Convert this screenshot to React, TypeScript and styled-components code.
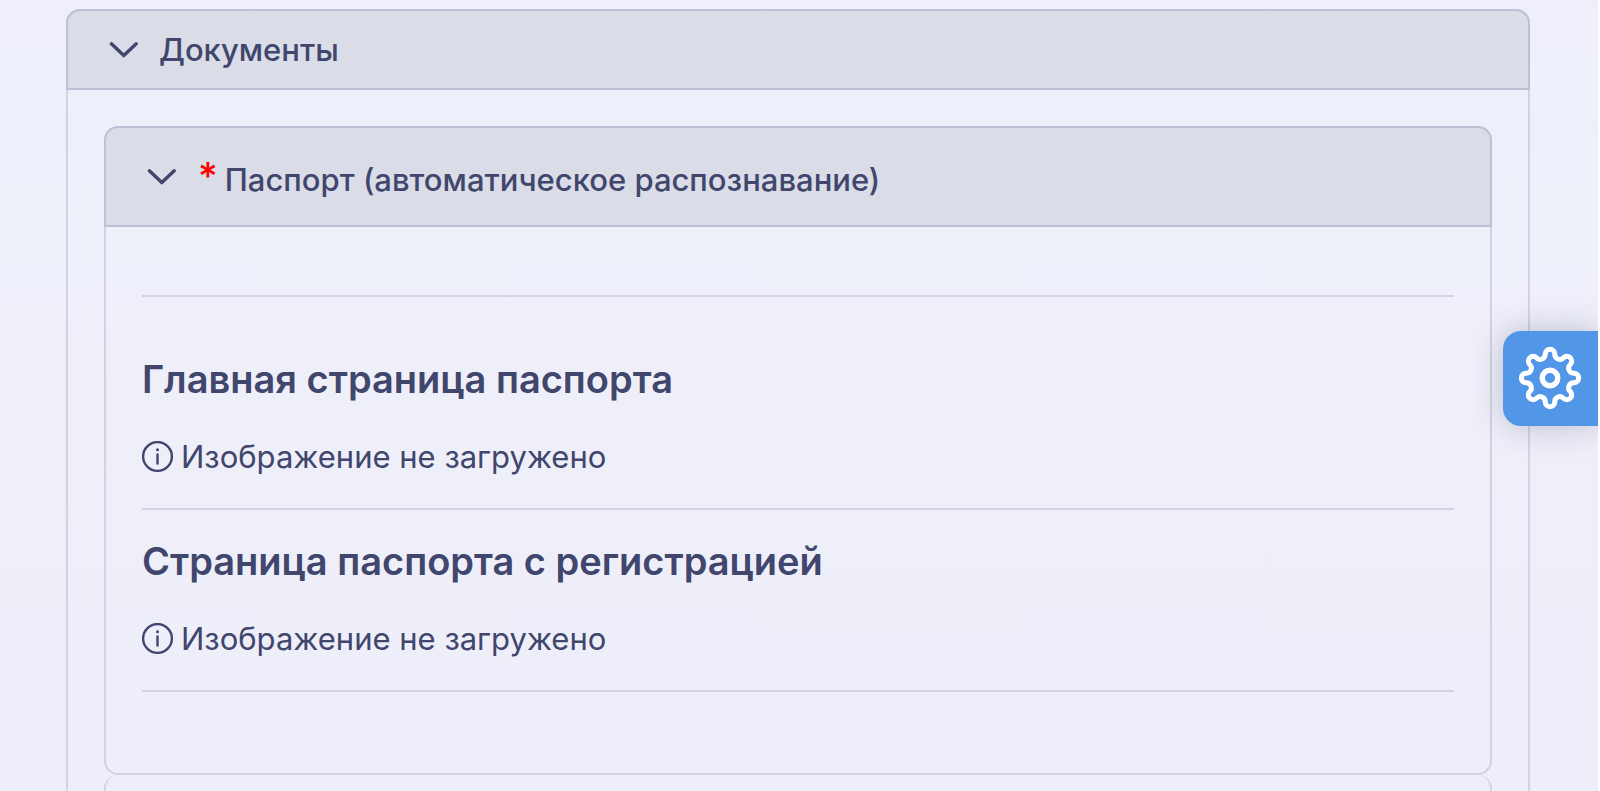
import React from "react";
import styled, { createGlobalStyle } from "styled-components";

const ink = "#40466c";
const line = "#d2d2e3";
const headLine = "#bfc0d5";

const GlobalStyle = createGlobalStyle`
  * { box-sizing: border-box; }
  html { background: #fff; }
  body {
    margin: 0;
    overflow: hidden;
    color: ${ink};
    font-family: Inter, "Noto Sans", sans-serif;
    font-size: 31px;
  }
  #root { height: 100vh; }
`;

const Page = styled.main`
  height: 100%;
  overflow: hidden;
  margin-right: 2px;
  padding: 9px 68px 0 66px;
  background: linear-gradient(180deg, #efeffb 0%, #edf0fa 16%, #efeffa 48%, #eeeefa 100%);
`;

const Panel = styled.section`
  border-radius: 14px;
`;

const PanelHeader = styled.button<{ $tall?: boolean }>`
  display: flex;
  align-items: center;
  width: 100%;
  height: ${(p) => (p.$tall ? 101 : 81)}px;
  padding: 0 41px;
  border: 2px solid ${headLine};
  border-radius: 14px 14px 0 0;
  background: #dadce8;
  color: inherit;
  font: inherit;
  font-weight: 500;
  text-align: left;
`;

const PanelBody = styled.div<{ $closed?: boolean }>`
  padding: 36px;
  border: 2px solid ${line};
  border-top: 0;
  border-radius: ${(p) => (p.$closed ? "0 0 14px 14px" : "0")};
`;

const Chevron = styled.svg`
  flex: none;
  width: 30px;
  height: 18px;
  margin-right: 20px;
`;

const Required = styled.span`
  align-self: flex-start;
  margin: 30px 7px 0 1px;
  color: #f00;
  font-size: 38px;
  line-height: 36px;
`;

const HeaderText = styled.span<{ $low?: boolean }>`
  line-height: 36px;
  padding-top: ${(p) => (p.$low ? 6 : 0)}px;
`;

const Entries = styled.div`
  margin: 32px 0 45px;
  border-top: 2px solid ${line};
`;

const Entry = styled.article<{ $roomy?: boolean }>`
  padding: ${(p) => (p.$roomy ? 58 : 27)}px 0 31px;
  border-bottom: 2px solid ${line};
`;

const EntryTitle = styled.h2`
  margin: 0 0 34px;
  font-size: 38px;
  font-weight: 600;
  line-height: 48px;
`;

const Status = styled.p`
  display: flex;
  align-items: center;
  gap: 7px;
  margin: 0;
  line-height: 40px;
`;

const InfoIcon = styled.svg`
  flex: none;
  width: 32px;
  height: 32px;
`;

const NextPanel = styled.section`
  height: 100px;
  border: 2px solid ${line};
  border-top: 0;
  border-radius: 14px;
`;

const SettingsButton = styled.button`
  position: fixed;
  top: 331px;
  right: 2px;
  display: grid;
  place-items: center;
  width: 95px;
  height: 95px;
  padding: 0 1px 2px 0;
  border: 0;
  border-radius: 18px 0 0 18px;
  background: #5296e7;
  box-shadow: 0 0 32px rgba(60, 60, 90, 0.28);
  clip-path: inset(-50px 0 -50px -50px);
`;

const Down = () => (
  <Chevron viewBox="0 0 30 18" fill="none" stroke={ink} strokeWidth="3.4" strokeLinecap="round" strokeLinejoin="round" aria-hidden="true">
    <path d="M2.4 2.8 L14.8 14.6 L27.2 2.8" />
  </Chevron>
);

// Eight round teeth joined by round notches; each pair of arcs meets on the line between their centres.
const gearPath = (() => {
  const tooth = { dist: 24.1, r: 4.8 };
  const notch = { dist: 25.6, r: 5 };
  const at = (dist: number, step: number) => {
    const a = (step * Math.PI) / 8;
    return [32 + dist * Math.sin(a), 32 - dist * Math.cos(a)];
  };
  const join = (toothStep: number, notchStep: number) => {
    const [tx, ty] = at(tooth.dist, toothStep);
    const [nx, ny] = at(notch.dist, notchStep);
    const k = tooth.r / (tooth.r + notch.r);
    return `${(tx + (nx - tx) * k).toFixed(2)} ${(ty + (ny - ty) * k).toFixed(2)}`;
  };
  let d = `M${join(0, -1)}`;
  for (let i = 0; i < 16; i += 2) {
    d += `A${tooth.r} ${tooth.r} 0 0 1 ${join(i, i + 1)}`;
    d += `A${notch.r} ${notch.r} 0 0 0 ${join(i + 2, i + 1)}`;
  }
  return `${d}Z`;
})();

const Gear = () => (
  <svg width="64" height="64" viewBox="0 0 64 64" fill="none" stroke="#fff" strokeWidth="5" strokeLinejoin="round" aria-hidden="true">
    <path d={gearPath} />
    <circle cx="32" cy="32" r="7.8" strokeWidth="5.4" />
  </svg>
);

const NotLoaded = () => (
  <Status>
    <InfoIcon viewBox="0 0 32 32" fill="none" stroke={ink} strokeWidth="2.4" strokeLinecap="round" aria-hidden="true">
      <circle cx="15.5" cy="15.5" r="14.4" />
      <path d="M15.5 13.5V22.5" />
      <circle cx="15.5" cy="8.8" r="1.5" fill={ink} stroke="none" />
    </InfoIcon>
    Изображение не загружено
  </Status>
);

export default function App() {
  return (
    <>
      <GlobalStyle />
      <Page>
        <Panel>
          <PanelHeader type="button" aria-expanded="true">
            <Down />
            <HeaderText>Документы</HeaderText>
          </PanelHeader>
          <PanelBody>
            <Panel>
              <PanelHeader type="button" aria-expanded="true" $tall>
                <Down />
                <Required>*</Required>
                <HeaderText $low>Паспорт (автоматическое распознавание)</HeaderText>
              </PanelHeader>
              <PanelBody $closed>
                <Entries>
                  <Entry $roomy>
                    <EntryTitle>Главная страница паспорта</EntryTitle>
                    <NotLoaded />
                  </Entry>
                  <Entry>
                    <EntryTitle>Страница паспорта с регистрацией</EntryTitle>
                    <NotLoaded />
                  </Entry>
                </Entries>
              </PanelBody>
            </Panel>
            <NextPanel />
          </PanelBody>
        </Panel>
      </Page>
      <SettingsButton type="button" aria-label="Настройки">
        <Gear />
      </SettingsButton>
    </>
  );
}
